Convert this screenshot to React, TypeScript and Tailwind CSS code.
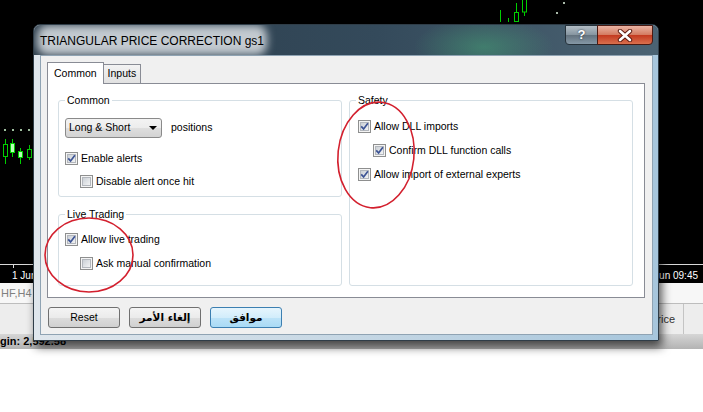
import type { ReactNode } from 'react';

const GREEN = '#00d000';

function Chart() {
  return (
    <svg width="703" height="268" className="block">
      {/* top candles */}
      <line x1={500.5} y1={10} x2={500.5} y2={22} stroke={GREEN} />
      <line x1={508.5} y1={18} x2={508.5} y2={22} stroke={GREEN} />
      <line x1={516.5} y1={3} x2={516.5} y2={22} stroke={GREEN} />
      <rect x={514.5} y={12.5} width={4} height={9} fill="#000" stroke={GREEN} />
      <line x1={524.5} y1={0} x2={524.5} y2={16} stroke={GREEN} />
      <rect x={522.5} y={-1} width={4} height={13} fill="#000" stroke={GREEN} />
      <rect x={556} y={12} width={2} height={2} fill="#a8b8a8" />
      <rect x={563} y={2} width={2} height={2} fill="#a8b8a8" />

      {/* left candles */}
      {[5, 13, 21, 29].map((x) => (
        <rect key={x} x={x - 1} y={129} width={2} height={2} fill="#9fbf9f" />
      ))}
      <line x1={5.5} y1={139} x2={5.5} y2={164} stroke={GREEN} />
      <rect x={3.5} y={144.5} width={4} height={12} fill="#000" stroke={GREEN} />
      <line x1={12.5} y1={139} x2={12.5} y2={157} stroke={GREEN} />
      <rect x={10.5} y={143.5} width={4} height={9} fill="#b8ffb8" stroke={GREEN} />
      <line x1={20.5} y1={148} x2={20.5} y2={164} stroke={GREEN} />
      <rect x={18.5} y={151.5} width={4} height={6} fill="#b8ffb8" stroke={GREEN} />
      <line x1={29.5} y1={145} x2={29.5} y2={160} stroke={GREEN} />
      <rect x={27.5} y={149.5} width={4} height={8} fill="#000" stroke={GREEN} />

      {/* time axis */}
      <line x1={0} y1={264.5} x2={703} y2={264.5} stroke="#d8d8d8" />
      <line x1={13.5} y1={264} x2={13.5} y2={268} stroke="#d8d8d8" />
    </svg>
  );
}

function Background() {
  return (
    <div className="flex flex-col">
      <div className="flex flex-col bg-black">
        <Chart />
        <div className="flex h-[15px] items-center text-[10px] text-white">
          <span className="pl-[12px]">1 Jun</span>
          <span className="ml-auto pr-[5px]">1 Jun 09:45</span>
        </div>
      </div>
      <div className="flex h-[21px] items-center border-b border-[#bdbdbd] bg-[#f7f7f7] pl-[1px] text-[11px] text-[#808080]">
        HF,H4
      </div>
      <div className="flex h-[30px] items-center bg-[#ededed] text-[11px] text-[#333]">
        <span className="ml-[650px]">Price</span>
        <span className="ml-[8px] h-full w-px bg-[#c4c4c4]" />
      </div>
      <div className="flex h-[15px] items-center bg-[linear-gradient(to_bottom,#d6d6d6,#b3b3b3)] text-[11px] font-bold text-black">
        gin: 2,592.58
      </div>
    </div>
  );
}

function CheckBox({ checked }: { checked: boolean }) {
  return (
    <span className="relative flex h-[13px] w-[13px] shrink-0 items-center justify-center border border-[#8e8f8f] bg-[#f4f4f4]">
      <span className="h-[9px] w-[9px] border border-[#b3b7bd] bg-[linear-gradient(135deg,#cbd0d6,#f2f3f4)]" />
      {checked && (
        <svg className="absolute left-[1px] top-[1px]" width="9" height="9" viewBox="0 0 9 9">
          <path d="M1.2 4.4 L3.6 6.9 L7.9 1.3" fill="none" stroke="#3d5495" strokeWidth="1.7" />
        </svg>
      )}
    </span>
  );
}

function Check({ label, checked, className = '' }: { label: string; checked: boolean; className?: string }) {
  return (
    <div className={`flex h-[13px] items-center gap-[3px] ${className}`}>
      <CheckBox checked={checked} />
      <span className="leading-[13px]">{label}</span>
    </div>
  );
}

function Group({ title, className, children }: { title: string; className: string; children: ReactNode }) {
  return (
    <div className={`relative flex flex-col rounded-[3px] border border-[#d5dfe5] ${className}`}>
      <span className="absolute left-[6px] top-[-8px] bg-white px-[2px] leading-[14px]">{title}</span>
      {children}
    </div>
  );
}

function Button({ children, primary = false, arabic = false }: { children: ReactNode; primary?: boolean; arabic?: boolean }) {
  return (
    <div
      className={`flex h-[21px] w-[72px] items-center justify-center rounded-[3px] border ${
        primary
          ? 'border-[#3c7fb1] bg-[linear-gradient(to_bottom,#e6f5fd,#d2edfb_50%,#bde3f8_50%,#a9daf5)]'
          : 'border-[#707070] bg-[linear-gradient(to_bottom,#f4f4f4,#ebebeb_50%,#dddddd_50%,#d0d0d0)]'
      } ${arabic ? "font-['DejaVu_Sans',sans-serif] text-[10.5px] font-bold" : ''}`}
    >
      {children}
    </div>
  );
}

function TitleBar() {
  return (
    <div className="flex h-[30px] justify-between overflow-hidden rounded-t-[6px] bg-[radial-gradient(ellipse_70px_30px_at_450px_22px,rgba(70,175,120,0.45),transparent),linear-gradient(to_right,#2b3c4a,#344a5b_55%,#4b6373)]">
      <div className="relative ml-[6px] self-center">
        <div className="absolute inset-x-[-3px] inset-y-[-3px] rounded-[10px] bg-[#c3cad0] blur-[4px]" />
        <span className="relative text-[12px] text-black">TRIANGULAR PRICE CORRECTION gs1</span>
      </div>
      <div className="mr-[5px] flex">
        <div className="flex h-[20px] w-[33px] items-center justify-center rounded-bl-[4px] border border-[#26323b] bg-[linear-gradient(to_bottom,#b3bec6,#8796a1_48%,#64737f_52%,#8598a6)] text-[13px] font-bold text-white [text-shadow:0_0_2px_#1b2530]">
          ?
        </div>
        <div className="-ml-px flex h-[20px] w-[56px] items-center justify-center rounded-br-[4px] border border-[#4a1a12] bg-[linear-gradient(to_bottom,#eab4a4,#d47c62_48%,#c43a20_52%,#d9704e)]">
          <svg width="16" height="13" viewBox="0 0 16 13">
            <path d="M3 2 L13 11 M13 2 L3 11" stroke="#5a1a10" strokeWidth="4.4" strokeLinecap="round" />
            <path d="M3 2 L13 11 M13 2 L3 11" stroke="#ffffff" strokeWidth="2.6" strokeLinecap="round" />
          </svg>
        </div>
      </div>
    </div>
  );
}

function Dialog() {
  return (
    <div className="absolute left-[33px] top-[24px] flex w-[626px] flex-col rounded-t-[7px] border border-[#2f3d48] bg-[linear-gradient(to_right,#dfe6ec,#c9d9e5_45%,#a7c6dc)] shadow-[3px_6px_10px_rgba(0,0,0,0.65)]">
      <TitleBar />
      <div className="mb-[5px] ml-[6px] mr-[5px] flex flex-col border border-[#8fa3b3] bg-[#f0f0f0] pb-[6px] pl-[6px] pr-[7px] pt-[6px] text-[10.5px]">
        <div className="flex items-end">
          <div className="relative z-10 -mb-px flex h-[22px] items-center border border-b-0 border-[#898c95] bg-white px-[6px]">
            Common
          </div>
          <div className="-ml-px flex h-[19px] items-center border border-b-0 border-[#898c95] bg-[linear-gradient(to_bottom,#f3f3f3,#e1e1e1)] px-[4px]">
            Inputs
          </div>
        </div>
        <div className="flex gap-[7px] border border-[#898c95] bg-white pb-[11px] pl-[10px] pr-[11px] pt-[16px]">
          <div className="flex w-[284px] flex-col gap-[17px]">
            <Group title="Common" className="h-[97px] pl-[6px] pt-[17px]">
              <div className="flex items-center gap-[9px]">
                <div className="flex h-[20px] w-[97px] items-center justify-between rounded-[3px] border border-[#8a8a8a] bg-[linear-gradient(to_bottom,#f3f3f3,#ececec_50%,#dedede_50%,#d3d3d3)] pl-[3px] pr-[4px]">
                  <span>Long &amp; Short</span>
                  <svg width="8" height="4" viewBox="0 0 8 4">
                    <path d="M0 0 H8 L4 4 Z" fill="#000" />
                  </svg>
                </div>
                <span>positions</span>
              </div>
              <Check label="Enable alerts" checked className="mt-[14px]" />
              <Check label="Disable alert once hit" checked={false} className="ml-[15px] mt-[10px]" />
            </Group>
            <Group title="Live Trading" className="h-[72px] pl-[6px] pt-[18px]">
              <Check label="Allow live trading" checked />
              <Check label="Ask manual confirmation" checked={false} className="ml-[15px] mt-[11px]" />
            </Group>
          </div>
          <Group title="Safety" className="w-[284px] pl-[8px] pt-[19px]">
            <Check label="Allow DLL imports" checked />
            <Check label="Confirm DLL function calls" checked className="ml-[15px] mt-[11px]" />
            <Check label="Allow import of external experts" checked className="mt-[11px]" />
          </Group>
        </div>
        <div className="ml-[1px] mt-[9px] flex gap-[9px]">
          <Button>Reset</Button>
          <Button arabic>إلغاء الأمر</Button>
          <Button primary arabic>
            موافق
          </Button>
        </div>
      </div>
    </div>
  );
}

export default function App() {
  return (
    <div className="relative h-[412px] w-[703px] overflow-hidden bg-white font-['Liberation_Sans','DejaVu_Sans',sans-serif] text-black">
      <Background />
      <Dialog />
      {/* red hand-drawn marks over the dialog */}
      <svg className="pointer-events-none absolute left-0 top-0" width="703" height="412">
        <ellipse cx={89} cy={255} rx={44} ry={37} fill="none" stroke="#d3202e" strokeWidth={1.6} />
        <ellipse cx={376} cy={155} rx={38} ry={53} fill="none" stroke="#d3202e" strokeWidth={1.6} transform="rotate(6 376 155)" />
      </svg>
    </div>
  );
}
